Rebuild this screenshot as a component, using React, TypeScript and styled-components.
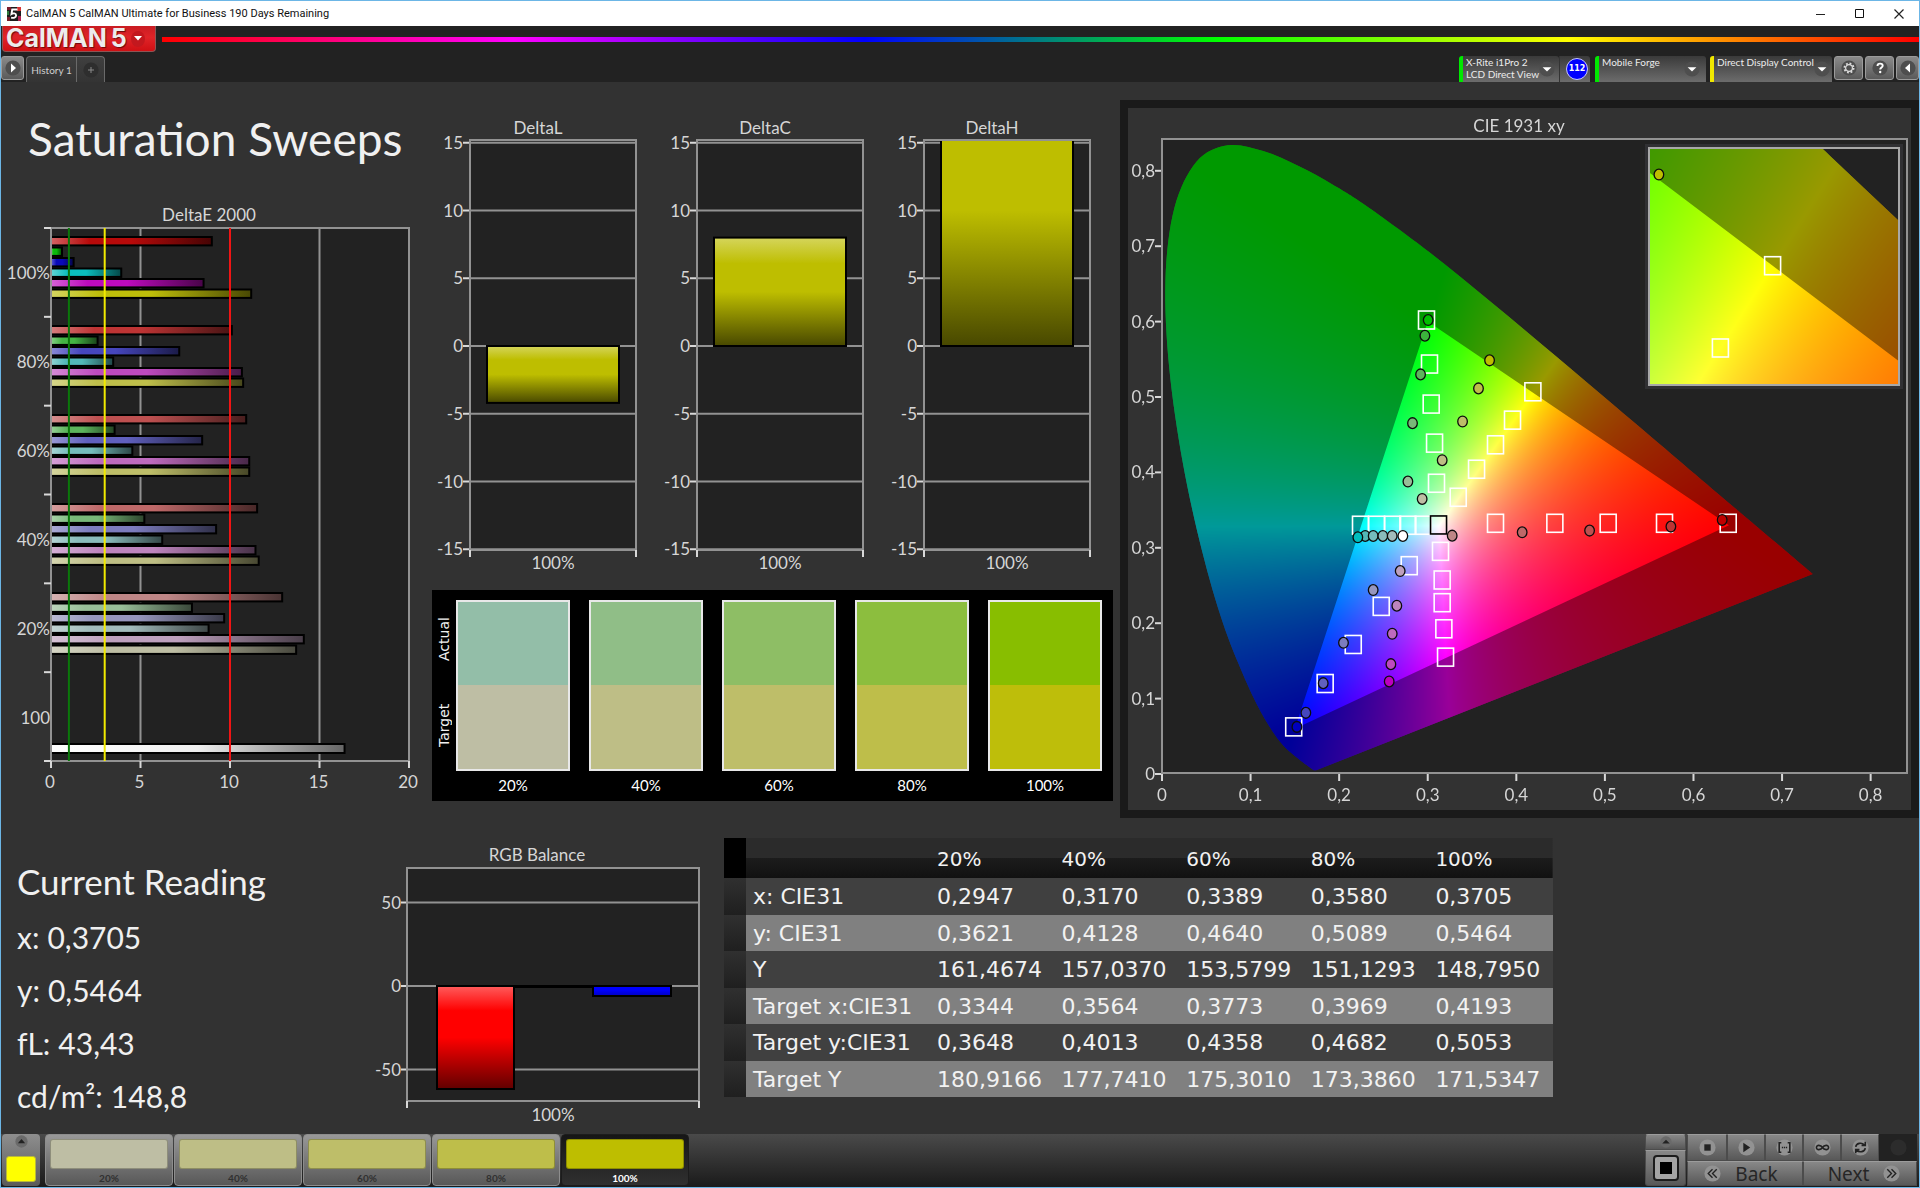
import React, { useLayoutEffect, useRef } from "react";
import styled, { createGlobalStyle, css } from "styled-components";

const ui = `Lato, "Open Sans", sans-serif`;
const wide = `"DejaVu Sans", Verdana, sans-serif`;
const system = `"Noto Sans", "Open Sans", sans-serif`;

const GlobalStyle = createGlobalStyle`
  *, *::before, *::after { box-sizing: border-box; }
  body { margin: 0; background: #323232; font-family: ${ui}; color: #f0f0f0; }
  button { font: inherit; color: inherit; border: 0; padding: 0; margin: 0; background: none; cursor: pointer; }
  h1, h2, p, dl, dd, dt { margin: 0; font-weight: 400; }
  svg { display: block; }
`;

/* ---------- window frame ---------- */

const Window = styled.div`
  min-height: 100vh;
  display: flex;
  flex-direction: column;
  border: 1px solid #6cb6e6;
`;

const TitleBar = styled.header`
  display: flex;
  align-items: center;
  height: 25px;
  padding: 0 8px 0 6px;
  gap: 5px;
  background: #fff;
  color: #111;
  font: 11px/16px Roboto, sans-serif;
`;

const Spacer = styled.div`
  flex: 1;
`;

const WindowButton = styled.button`
  display: grid;
  place-items: center;
  width: 24px;
  height: 24px;
  margin-left: 10px;
`;

const BrandBar = styled.div`
  display: flex;
  align-items: flex-start;
  gap: 6px;
  height: 30px;
  background: #222;
`;

const Brand = styled.button`
  display: flex;
  align-items: center;
  gap: 4px;
  width: 154px;
  height: 26px;
  margin-left: 1px;
  padding: 0 10px 2px 3px;
  border-radius: 0 0 4px 4px;
  border: 1px solid #8d5555;
  border-top: 0;
  background: linear-gradient(#c91c22, #e02428 45%, #cf1014);
  color: #ececec;
  font: 700 25px/22px Inter, sans-serif;
  text-shadow: 1px 1px 1px #6d0a0a;
`;

const BrandArrow = styled.span`
  display: grid;
  place-items: center;
  width: 16px;
  height: 16px;
  margin: 2px 0 0 auto;
  border-radius: 50%;
  background: #c3181e;
`;

const Spectrum = styled.div`
  flex: 1;
  height: 5px;
  margin-top: 11px;
  background: linear-gradient(90deg, #f00, #f0f 20%, #00f 40%, #0f0 60%, #ff0 80%, #f00);
`;

const TabBar = styled.nav`
  display: flex;
  align-items: flex-start;
  height: 26px;
  background: #222;
  font-size: 11px;
`;

const bevel = css`
  border: 1px solid #9b9b9b;
  border-radius: 3px;
  background: linear-gradient(#8a8a8a, #5a5a5a);
`;

const ToolButton = styled.button<{ $edge?: "left" | "right" }>`
  ${bevel}
  display: grid;
  place-items: center;
  width: ${(p) => (p.$edge ? 23 : 29)}px;
  height: 24px;
  margin-right: ${(p) => (p.$edge === "right" ? 0 : 2)}px;
`;

const Tab = styled.button<{ $add?: boolean }>`
  height: 26px;
  display: grid;
  place-items: center;
  width: ${(p) => (p.$add ? 28 : 51)}px;
  border: 1px solid #6a6a6a;
  border-width: 1px 1px 0 ${(p) => (p.$add ? 0 : 1)}px;
  border-radius: ${(p) => (p.$add ? "0 4px 0 0" : "4px 0 0 0")};
  background: linear-gradient(#3f3f3f, #343434);
  color: #cfcfcf;
  font-size: 10px;
`;

const Device = styled.button<{ $state: string; $width: number }>`
  display: flex;
  align-items: flex-start;
  width: ${(p) => p.$width}px;
  height: 26px;
  padding: 0 6px 0 3px;
  border-left: 4px solid ${(p) => p.$state};
  border-radius: 3px 3px 0 0;
  background: linear-gradient(#3a3a3a, #6c6c6c);
  color: #ececec;
  font-size: 10px;
  line-height: 12px;
  text-align: left;
  white-space: nowrap;
`;

const DeviceArrow = styled.span`
  margin: 5px 0 0 auto;
`;

const Count = styled.div`
  display: grid;
  place-items: center;
  width: 31px;
  height: 26px;
  margin-right: 5px;
  padding-left: 4px;
  border-left: 1px solid #333;
  border-radius: 0 3px 0 0;
  background: linear-gradient(#3a3a3a, #6c6c6c);
`;

const CountBadge = styled.span`
  display: grid;
  place-items: center;
  width: 22px;
  height: 22px;
  border-radius: 50%;
  border: 1px solid #c9c9ff;
  background: #00f;
  color: #fff;
  font: 700 8px/10px ${wide};
`;

const Gap = styled.span<{ $size: number }>`
  width: ${(p) => p.$size}px;
`;

/* ---------- page ---------- */

const Page = styled.main`
  flex: 1;
  background: #323232;
`;

const Upper = styled.section`
  display: grid;
  grid-template-columns: 424fr 695fr 799fr;
  align-items: start;
`;

const Lower = styled.section`
  display: grid;
  grid-template-columns: 374fr 349fr 829fr 366fr;
  align-items: start;
`;

const Heading = styled.h1`
  height: 123px;
  padding: 25px 0 0 27px;
  font-size: 46px;
  line-height: 64px;
  white-space: nowrap;
`;

const Middle = styled.div`
  padding-top: 36px;
`;

const DeltaRow = styled.div`
  display: grid;
  grid-template-columns: repeat(3, 1fr);
  padding-right: 14px;
`;

const Chart = styled.svg`
  width: 100%;
  height: auto;
  font-family: ${ui};
  font-size: 17px;
  fill: #d6d6d6;
`;

const SwatchPanel = styled.div`
  display: flex;
  height: 211px;
  margin: 0 7px;
  padding: 10px 11px 0 0;
  background: #000;
`;

const SwatchSide = styled.div`
  display: grid;
  grid-template-rows: 78px 94px;
  justify-content: center;
  align-content: start;
  width: 24px;
  font: 14px/18px ${wide};
`;

const SideLabel = styled.span`
  display: grid;
  place-items: center;
  writing-mode: vertical-rl;
  transform: rotate(180deg);
`;

const SwatchGrid = styled.div`
  flex: 1;
  display: grid;
  grid-template-columns: repeat(5, 1fr);
  column-gap: 19px;
`;

const Swatch = styled.figure`
  margin: 0;
  text-align: center;
  font-size: 15px;
  line-height: 28px;
  color: #fff;
`;

const SwatchPair = styled.div<{ $actual: string; $target: string }>`
  height: 171px;
  border: 2px solid #e8e8e8;
  background: linear-gradient(${(p) => `${p.$actual} 50%, ${p.$target} 50%`});
`;

const CiePanel = styled.div`
  display: grid;
  margin-top: 18px;
  border: 8px solid #1a1a1a;

  > * {
    grid-area: 1 / 1;
  }
`;

const GamutCanvas = styled.canvas`
  display: block;
  width: 100%;
  height: auto;
`;

const Reading = styled.div`
  padding: 33px 0 0 16px;
`;

const ReadingTitle = styled.h2`
  font-size: 35px;
  line-height: 60px;
`;

const ReadingList = styled.dl`
  font-size: 30px;
  line-height: 53px;
`;

const ReadingItem = styled.div`
  display: flex;
  gap: 8px;
`;

const BalanceBox = styled.div`
  padding-top: 20px;
`;

const Table = styled.table`
  width: 100%;
  height: 259px;
  margin-top: 20px;
  table-layout: fixed;
  border-collapse: collapse;
  font: 22px/26px ${wide};
  text-align: left;
  white-space: nowrap;
  color: #f2f2f2;

  th,
  td {
    padding: 2px 0 0 7px;
    font-weight: 400;
  }
`;

const HeadRow = styled.tr`
  height: 40px;
  font-size: 20px;
  background: linear-gradient(#2b2b2b 50%, #1c1c1c 50%, #111);
`;

const HeadGrip = styled.td`
  background: #000;
`;

const Row = styled.tr<{ $light: boolean }>`
  background: ${(p) => (p.$light ? "#808080" : "#404040")};
`;

const Grip = styled.td`
  background: linear-gradient(#303030, #1f1f1f);
`;

const StripCol = styled.col`
  width: 22px;
`;

const LabelCol = styled.col`
  width: 184px;
`;

/* ---------- bottom bar ---------- */

const Dock = styled.footer`
  display: flex;
  height: 53px;
  padding: 0 2px 1px 1px;
  background: linear-gradient(#4a4a4a, #1a1a1a);
`;

const PatchPicker = styled.button`
  display: flex;
  flex-direction: column;
  align-items: center;
  justify-content: space-between;
  width: 38px;
  margin-right: 5px;
  padding: 1px 0 4px;
  border-radius: 4px;
  background: linear-gradient(#8e8e8e, #5a5a5a);
`;

const PatchColor = styled.span`
  width: 30px;
  height: 26px;
  border-radius: 3px;
  border: 1px solid #b8b83a;
  background: #ff0;
`;

const Patch = styled.button<{ $color: string; $active: boolean }>`
  display: flex;
  flex-direction: column;
  width: 128px;
  margin-right: 1px;
  padding: 4px 4px 0;
  border-radius: 4px;
  border: 1px solid ${(p) => (p.$active ? "#1c1c1c" : "#8d8d8d")};
  background: ${(p) => (p.$active ? "linear-gradient(#161616, #303030)" : "linear-gradient(#989898, #585858)")};
  color: ${(p) => (p.$active ? "#fff" : "#303030")};
  font-size: 10px;
  font-weight: 700;
  line-height: 14px;

  &::before {
    content: "";
    width: 100%;
    height: 30px;
    margin-bottom: 2px;
    border-radius: 3px;
    border: 1px solid rgba(0, 0, 0, 0.25);
    background: ${(p) => p.$color};
  }

  > span {
    width: 100%;
    text-align: center;
  }
`;

const grey = css`
  border: 1px solid #4c4c4c;
  border-top-color: #9c9c9c;
  background: linear-gradient(#888, #585858);
`;

const StopColumn = styled.div`
  display: grid;
  grid-template-rows: 16px 1fr;
  width: 41px;
  margin-right: 1px;

  button {
    ${grey}
    display: grid;
    place-items: center;
    border-radius: 3px 3px 0 0;
  }

  button + button {
    border-radius: 0 0 3px 3px;
  }
`;

const Transport = styled.div`
  display: grid;
  grid-template-columns: 40px repeat(5, 38px);
  grid-template-rows: 27px 25px;
`;

const TransportButton = styled.button<{ $off?: boolean }>`
  ${grey}
  display: grid;
  place-items: center;
  ${(p) => p.$off && "background: #222; border-color: #222;"}
`;

const StepButton = styled.button<{ $next?: boolean }>`
  ${grey}
  grid-column: span 3;
  display: flex;
  align-items: center;
  justify-content: center;
  gap: 14px;
  padding-left: ${(p) => (p.$next ? 8 : 0)}px;
  padding-right: ${(p) => (p.$next ? 0 : 8)}px;
  color: #262626;
  font: 19px/22px ${system};
`;

/* ---------- small drawings ---------- */

type DiscProps = { size?: number; tone?: string; children?: React.ReactNode };

const Disc = ({ size = 16, tone = "#4e4e4e", children }: DiscProps) => (
  <svg width={size} height={size} viewBox="0 0 16 16" aria-hidden="true">
    <circle cx="8" cy="8" r="7.6" fill={tone} />
    {children}
  </svg>
);

const DownArrow = () => <path d="M3.6 6.2h8.8L8 10.6z" fill="#fff" />;

const AppIcon = () => (
  <svg width="14" height="14" viewBox="0 0 14 14" aria-hidden="true">
    <rect width="14" height="14" fill="#1c1c1c" />
    <path d="M0 0h4v3H0zM0 10h3v4H0z" fill="#7a1c2a" />
    <path d="M10 0h4v4h-4z" fill="#d63434" />
    <path d="M11 9h3v5h-3z" fill="#b02050" />
    <path d="M0 4h2v4H0z" fill="#2f7a3c" />
    <path d="M10.500 2.500H5.200L4.500 7c1.500-1 4.600-1 4.600 1.400 0 2.200-2.600 2.800-5 2.200" fill="none" stroke="#fff" strokeWidth="1.900" />
  </svg>
);

/* ---------- bar charts ---------- */

const axis = { stroke: "#929292", strokeWidth: 2, fill: "none" };
const tick = { stroke: "#d8d8d8", strokeWidth: 2 };

const mix = (hex: string, to: number, amount: number) => {
  const parts = [1, 3, 5].map((i) => parseInt(hex.slice(i, i + 2), 16));
  return `rgb(${parts.map((v) => Math.round(v + (to - v) * amount)).join(",")})`;
};

const Shade = ({ id, color, vertical }: { id: string; color: string; vertical?: boolean }) => (
  <linearGradient id={id} x1="0" y1="0" x2={vertical ? 0 : 1} y2={vertical ? 1 : 0}>
    <stop offset="0" stopColor={mix(color, 255, 0.36)} />
    <stop offset="0.24" stopColor={color} />
    <stop offset="0.5" stopColor={color} />
    <stop offset="1" stopColor={mix(color, 0, 0.62)} />
  </linearGradient>
);

const sweeps = [
  { label: "100%", colors: ["#b80a0a", "#0ab80a", "#0a0ab8", "#0abebe", "#be0abe", "#bebe0a"], values: [9.04, 0.67, 1.32, 3.98, 8.58, 11.24] },
  { label: "80%", colors: ["#be3434", "#44b444", "#4646be", "#52b8b8", "#be4abe", "#bebe4a"], values: [10.16, 2.66, 7.22, 3.53, 10.72, 10.79] },
  { label: "60%", colors: ["#be5050", "#5cb45c", "#6060be", "#74bcbc", "#be6abe", "#bebe68"], values: [10.96, 3.61, 8.5, 4.6, 11.13, 11.13] },
  { label: "40%", colors: ["#be6868", "#78b878", "#7c7cbe", "#8abcbc", "#be84be", "#bebe84"], values: [11.57, 5.27, 9.28, 6.27, 11.48, 11.66] },
  { label: "20%", colors: ["#be8686", "#98be98", "#9696be", "#a2bcbc", "#bea0be", "#bebea4"], values: [12.97, 7.93, 9.73, 8.86, 14.18, 13.75] },
];

const DeltaE = () => {
  const x0 = 50;
  const y0 = 23;
  const unit = 17.9;
  const height = 533;
  const band = height / 6;
  const right = x0 + 20 * unit;
  const bottom = y0 + height;
  return (
    <Chart viewBox="0 0 424 595" role="img" aria-label="DeltaE 2000">
      <defs>
        {sweeps.flatMap((s, g) => s.colors.map((c, i) => <Shade key={`${g}${i}`} id={`de${g}${i}`} color={c} />))}
        <linearGradient id="deWhite">
          <stop offset="0" stopColor="#fff" />
          <stop offset="0.5" stopColor="#eee" />
          <stop offset="1" stopColor="#666" />
        </linearGradient>
      </defs>
      <text x="208" y="16" textAnchor="middle">DeltaE 2000</text>
      <rect x={x0} y={y0} width={right - x0} height={height} fill="#222" />
      {[5, 10, 15].map((v) => (
        <line key={v} x1={x0 + v * unit} x2={x0 + v * unit} y1={y0} y2={bottom} {...axis} />
      ))}
      {sweeps.map((s, g) =>
        s.values.map((v, i) => (
          <rect key={`${g}${i}`} x={x0} y={y0 + g * 89 + i * 10.5 + 9} width={v * unit - 1} height="8.400" fill={`url(#de${g}${i})`} stroke="#000" strokeWidth="2" />
        )),
      )}
      <rect x={x0} y={bottom - 17} width={16.4 * unit} height="9" fill="url(#deWhite)" stroke="#000" strokeWidth="2" />
      <rect x={x0} y={y0} width={right - x0} height={height} {...axis} />
      {[0, 1, 2, 3, 4, 5, 6].map((i) => (
        <line key={i} x1={x0 - 7} x2={x0} y1={y0 + i * band} y2={y0 + i * band} {...tick} />
      ))}
      {[0, 5, 10, 15, 20].map((v) => (
        <g key={v}>
          <line x1={x0 + v * unit} x2={x0 + v * unit} y1={bottom} y2={bottom + 7} {...tick} />
          <text x={x0 + v * unit - 1} y={bottom + 27} textAnchor="middle">{v}</text>
        </g>
      ))}
      {[...sweeps.map((s) => s.label), "100"].map((label, i) => (
        <text key={i} x={x0 - 1} y={y0 + (i + 0.5) * band + 7} textAnchor="end">{label}</text>
      ))}
      <line x1={x0 + unit} x2={x0 + unit} y1={y0} y2={bottom} stroke="#0a780a" strokeWidth="2" />
      <line x1={x0 + 3 * unit} x2={x0 + 3 * unit} y1={y0} y2={bottom} stroke="#f2ea00" strokeWidth="2" />
      <line x1={x0 + 10 * unit} x2={x0 + 10 * unit} y1={y0} y2={bottom} stroke="#f01414" strokeWidth="2" />
    </Chart>
  );
};

const DeltaBar = ({ name, value }: { name: string; value: number }) => {
  const y = (v: number) => 228 - v * 13.55;
  const clipped = value > 15.4;
  const top = y(Math.max(value, 0));
  const height = Math.abs(value) * 13.55;
  return (
    <Chart viewBox="0 0 227 472" role="img" aria-label={name}>
      <defs>
        <Shade id={`fill${name}`} color="#bebe00" vertical />
        <clipPath id={`clip${name}`}>
          <rect x="45" y="22" width="167" height="410" />
        </clipPath>
      </defs>
      <text x="113" y="16" textAnchor="middle">{name}</text>
      <rect x="45" y="22" width="166" height="410" fill="#222" />
      {[15, 10, 5, 0, -5, -10, -15].map((v) => (
        <g key={v}>
          <line x1="45" x2="211" y1={y(v)} y2={y(v)} {...axis} />
          <line x1="38" x2="44" y1={y(v)} y2={y(v)} {...tick} />
          <text x="38" y={y(v) + 6} textAnchor="end">{v}</text>
        </g>
      ))}
      <rect x="62" y={top} width="132" height={height} fill={`url(#fill${name})`} stroke="#000" strokeWidth="2" clipPath={clipped ? `url(#clip${name})` : undefined} />
      <rect x="45" y="22" width="166" height="410" {...axis} />
      <path d="M45 432v7M211 432v7" {...tick} />
      <text x="128" y="451" textAnchor="middle">100%</text>
    </Chart>
  );
};

const RgbBalance = () => {
  const y = (v: number) => 148 - v * 1.67;
  return (
    <Chart viewBox="0 0 349 296" role="img" aria-label="RGB Balance">
      <defs>
        <Shade id="balRed" color="#ff0000" vertical />
        <linearGradient id="balBlue" x1="0" y1="0" x2="0" y2="1">
          <stop offset="0.4" stopColor="#0000ff" />
          <stop offset="1" stopColor="#0000c0" />
        </linearGradient>
      </defs>
      <text x="162" y="23" textAnchor="middle">RGB Balance</text>
      <rect x="32" y="30" width="292" height="233" fill="#222" />
      {[50, 0, -50].map((v) => (
        <g key={v}>
          <line x1="32" x2="324" y1={y(v)} y2={y(v)} {...axis} />
          <line x1="26" x2="31" y1={y(v)} y2={y(v)} {...tick} />
          <text x="26" y={y(v) + 6} textAnchor="end">{v}</text>
        </g>
      ))}
      <rect x="62" y="148" width="77" height="103" fill="url(#balRed)" stroke="#000" strokeWidth="2" />
      <rect x="139" y="147" width="79" height="3" fill="#000" />
      <rect x="218" y="148" width="78" height="10" fill="url(#balBlue)" stroke="#000" strokeWidth="2" />
      <rect x="32" y="30" width="292" height="233" {...axis} />
      <path d="M32 263v7M324 263v7" {...tick} />
      <text x="178" y="283" textAnchor="middle">100%</text>
    </Chart>
  );
};

/* ---------- chromaticity diagram ---------- */

type Point = [number, number];
type View = { x: number; y: number; w: number; h: number; ox: number; oy: number; sx: number; sy: number };

const CIE_W = 783;
const CIE_H = 702;

/* ox/oy is the pixel position of chromaticity (0, 0); sx/sy are pixels per unit. */
const mainView: View = { x: 34, y: 31, w: 745, h: 634, ox: 34, oy: 666, sx: 885.8, sy: 754 };
const zoomView: View = { x: 521, y: 40, w: 250, h: 237, ox: 644.6 - 0.4193 * 2330, oy: 157.7 + 0.5053 * 2218, sx: 2330, sy: 2218 };

const locus: Point[] = [
  [0.1741, 0.005], [0.1714, 0.0051], [0.1689, 0.0069], [0.1644, 0.0109], [0.1566, 0.0177], [0.144, 0.0297],
  [0.1355, 0.0399], [0.1241, 0.0578], [0.1096, 0.0868], [0.0913, 0.1327], [0.0687, 0.2007], [0.0454, 0.295],
  [0.0235, 0.4127], [0.0082, 0.5384], [0.0039, 0.6548], [0.0139, 0.7502], [0.0389, 0.812], [0.0743, 0.8338],
  [0.1142, 0.8262], [0.1547, 0.8059], [0.1929, 0.7816], [0.2296, 0.7543], [0.3016, 0.6923], [0.3731, 0.6245],
  [0.4441, 0.5547], [0.5125, 0.4866], [0.5752, 0.4242], [0.627, 0.3725], [0.6658, 0.334], [0.6915, 0.3083],
  [0.719, 0.2809], [0.7347, 0.2653],
];

const gamut: Point[] = [[0.64, 0.33], [0.3, 0.6], [0.15, 0.06]];

const place = (v: View, [x, y]: Point): Point => [v.ox + x * v.sx, v.oy - y * v.sy];

const traceLocus = (path: Path2D, v: View) => {
  const p = locus.map((pt) => place(v, pt));
  path.moveTo(p[0][0], p[0][1]);
  for (let i = 0; i < p.length - 1; i++) {
    const a = p[Math.max(i - 1, 0)];
    const b = p[i];
    const c = p[i + 1];
    const d = p[Math.min(i + 2, p.length - 1)];
    path.bezierCurveTo(b[0] + (c[0] - a[0]) / 6, b[1] + (c[1] - a[1]) / 6, c[0] - (d[0] - b[0]) / 6, c[1] - (d[1] - b[1]) / 6, c[0], c[1]);
  }
  path.closePath();
};

const paintView = (ctx: CanvasRenderingContext2D, v: View) => {
  const layer = document.createElement("canvas");
  layer.width = v.w;
  layer.height = v.h;
  const layerCtx = layer.getContext("2d")!;
  const image = layerCtx.createImageData(v.w, v.h);
  for (let py = 0; py < v.h; py++) {
    for (let px = 0; px < v.w; px++) {
      const x = (v.x + px + 0.5 - v.ox) / v.sx;
      const y = Math.max((v.oy - (v.y + py + 0.5)) / v.sy, 0.0005);
      const z = 1 - x - y;
      const r = Math.max(3.2406 * x - 1.5372 * y - 0.4986 * z, 0);
      const g = Math.max(-0.9689 * x + 1.8758 * y + 0.0415 * z, 0);
      const b = Math.max(0.0557 * x - 0.204 * y + 1.057 * z, 0);
      const k = 255 / Math.max(r, g, b);
      const i = (py * v.w + px) * 4;
      image.data[i] = r * k;
      image.data[i + 1] = g * k;
      image.data[i + 2] = b * k;
      image.data[i + 3] = 255;
    }
  }
  layerCtx.putImageData(image, 0, 0);

  ctx.save();
  ctx.beginPath();
  ctx.rect(v.x, v.y, v.w, v.h);
  ctx.clip();
  ctx.fillStyle = "#222";
  ctx.fillRect(v.x, v.y, v.w, v.h);
  const outline = new Path2D();
  traceLocus(outline, v);
  ctx.clip(outline);
  ctx.drawImage(layer, v.x, v.y);
  const dim = new Path2D();
  dim.rect(v.x, v.y, v.w, v.h);
  gamut.forEach((pt, i) => {
    const [x, y] = place(v, pt);
    if (i) dim.lineTo(x, y);
    else dim.moveTo(x, y);
  });
  dim.closePath();
  ctx.fillStyle = "rgba(0, 0, 0, 0.4)";
  ctx.fill(dim, "evenodd");
  ctx.restore();
};

const targets: Point[] = [
  [0.2986, 0.6021], [0.302, 0.5437], [0.3039, 0.4906], [0.3077, 0.4388], [0.3099, 0.3856],
  [0.4187, 0.5069], [0.3957, 0.4693], [0.3765, 0.4366], [0.3551, 0.4042], [0.3344, 0.367],
  [0.3765, 0.3325], [0.4435, 0.3325], [0.5037, 0.3325], [0.5673, 0.3325], [0.6392, 0.3325],
  [0.2241, 0.3299], [0.2422, 0.3299], [0.2603, 0.3299], [0.2776, 0.3299], [0.2949, 0.3299],
  [0.3144, 0.2953], [0.3163, 0.2573], [0.3163, 0.2272], [0.3182, 0.1926], [0.3201, 0.155],
  [0.2791, 0.2763], [0.2475, 0.2223], [0.2159, 0.1718], [0.1842, 0.12], [0.1487, 0.0625],
];

const readings: [number, number, string][] = [
  [0.3005, 0.6021, "#00be00"], [0.2968, 0.5813, "#3cb43c"], [0.2919, 0.53, "#5cb45c"], [0.2828, 0.4653, "#78b878"], [0.2776, 0.3879, "#98be98"],
  [0.3698, 0.5486, "#bebe00"], [0.3573, 0.5114, "#bebe4a"], [0.3393, 0.4675, "#bebe68"], [0.3163, 0.4162, "#bebe84"], [0.2937, 0.3648, "#bebea4"],
  [0.6324, 0.3369, "#be0000"], [0.5745, 0.3281, "#be3434"], [0.4827, 0.3228, "#be5050"], [0.4066, 0.3206, "#be6868"], [0.3276, 0.3161, "#be8686"],
  [0.2294, 0.3157, "#52b8b8"], [0.2384, 0.3157, "#74bcbc"], [0.2493, 0.3157, "#8abcbc"], [0.2599, 0.3157, "#a2bcbc"], [0.2719, 0.3157, "#ffffff"],
  [0.2211, 0.3139, "#00bebe"],
  [0.2565, 0.1227, "#be00be"], [0.2584, 0.1457, "#be4abe"], [0.2599, 0.186, "#be6abe"], [0.2651, 0.2232, "#be84be"], [0.2689, 0.2692, "#bea0be"],
  [0.2384, 0.244, "#9696be"], [0.2049, 0.174, "#7c7cbe"], [0.182, 0.1205, "#6060be"], [0.1624, 0.0811, "#4646be"], [0.1523, 0.0625, "#0000be"],
];

const Target = ({ at, color = "#fff" }: { at: Point; color?: string }) => (
  <rect x={at[0] - 8} y={at[1] - 9} width="16" height="18" fill="none" stroke={color} strokeWidth="1.600" />
);

const Sample = ({ at, color }: { at: Point; color: string }) => (
  <ellipse cx={at[0]} cy={at[1]} rx="4.800" ry="5.400" fill={color} stroke="#0c0c0c" strokeWidth="1.300" />
);

const comma = (v: number) => (v === 0 ? "0" : v.toFixed(1).replace(".", ","));

const Chromaticity = () => {
  const canvas = useRef<HTMLCanvasElement>(null);
  useLayoutEffect(() => {
    const ctx = canvas.current!.getContext("2d")!;
    paintView(ctx, mainView);
    ctx.fillStyle = "#303033";
    ctx.fillRect(zoomView.x - 4, zoomView.y - 4, zoomView.w + 8, zoomView.h + 8);
    paintView(ctx, zoomView);
  }, []);
  const steps = [0, 0.1, 0.2, 0.3, 0.4, 0.5, 0.6, 0.7, 0.8];
  return (
    <CiePanel>
      <GamutCanvas ref={canvas} width={CIE_W} height={CIE_H} />
      <Chart viewBox={`0 0 ${CIE_W} ${CIE_H}`} role="img" aria-label="CIE 1931 xy">
        <text x="391" y="24" textAnchor="middle">CIE 1931 xy</text>
        <rect x="34" y="31" width="745" height="634" {...axis} />
        {steps.map((v) => {
          const [x, y] = place(mainView, [v, v]);
          return (
            <g key={v}>
              <line x1={x} x2={x} y1="666" y2="673" {...tick} />
              <text x={x} y="693" textAnchor="middle">{comma(v)}</text>
              <line x1="27" x2="33" y1={y} y2={y} {...tick} />
              <text x="27" y={y + 6} textAnchor="end">{comma(v)}</text>
            </g>
          );
        })}
        {targets.map((t, i) => (
          <Target key={i} at={place(mainView, t)} />
        ))}
        <Target at={place(mainView, [0.3122, 0.3303])} color="#000" />
        {readings.map(([x, y, c], i) => (
          <Sample key={i} at={place(mainView, [x, y])} color={c} />
        ))}
        <rect x={zoomView.x} y={zoomView.y} width={zoomView.w} height={zoomView.h} {...axis} stroke="#a8a8a8" />
        <Target at={place(zoomView, [0.4193, 0.5053])} />
        <Target at={place(zoomView, [0.3969, 0.4682])} />
        <Sample at={place(zoomView, [0.3705, 0.5464])} color="#bebe00" />
      </Chart>
    </CiePanel>
  );
};

/* ---------- data ---------- */

const swatches = [
  { label: "20%", actual: "#93bea8", target: "#bebea4", patch: "#bebea4" },
  { label: "40%", actual: "#90be87", target: "#bebe86", patch: "#bebe86" },
  { label: "60%", actual: "#8ebe65", target: "#bebe69", patch: "#bebe69" },
  { label: "80%", actual: "#8cbe3e", target: "#bebe4a", patch: "#bebe4a" },
  { label: "100%", actual: "#88be00", target: "#bebe0a", patch: "#bebe00" },
];

const rows: [string, string[]][] = [
  ["x: CIE31", ["0,2947", "0,3170", "0,3389", "0,3580", "0,3705"]],
  ["y: CIE31", ["0,3621", "0,4128", "0,4640", "0,5089", "0,5464"]],
  ["Y", ["161,4674", "157,0370", "153,5799", "151,1293", "148,7950"]],
  ["Target x:CIE31", ["0,3344", "0,3564", "0,3773", "0,3969", "0,4193"]],
  ["Target y:CIE31", ["0,3648", "0,4013", "0,4358", "0,4682", "0,5053"]],
  ["Target Y", ["180,9166", "177,7410", "175,3010", "173,3860", "171,5347"]],
];

const current = [
  ["x:", "0,3705"],
  ["y:", "0,5464"],
  ["fL:", "43,43"],
  ["cd/m²:", "148,8"],
];

const transport = [
  { name: "Stop", icon: <path d="M5 5h6v6H5z" fill="#222" /> },
  { name: "Play", icon: <path d="M5 3.500v9l6.500-4.500z" fill="#222" /> },
  { name: "Read series", icon: <path d="M5 3.500H3v9h2M11 3.500h2v9h-2M5.500 8h1.200M7.400 8h1.200M9.300 8h1.200" fill="none" stroke="#222" strokeWidth="1.500" /> },
  { name: "Continuous", icon: <path d="M8 8C6.500 5.600 2.300 5 2.300 8S6.500 10.400 8 8s5.700-3 5.700 0S9.500 10.400 8 8z" fill="none" stroke="#222" strokeWidth="1.500" /> },
  { name: "Refresh", icon: <path d="M3.500 7.500a4.500 4 0 0 1 8-2M12.500 2.500v3.500H9M12.500 8.500a4.500 4 0 0 1-8 2M3.500 13.500V10H7" fill="none" stroke="#222" strokeWidth="1.500" /> },
];

/* ---------- app ---------- */

export default function App() {
  return (
    <>
      <GlobalStyle />
      <Window>
        <TitleBar>
          <AppIcon />
          <span>CalMAN 5 CalMAN Ultimate for Business 190 Days Remaining</span>
          <Spacer />
          <WindowButton aria-label="Minimize">
            <svg width="10" height="10"><path d="M0 5.500h9" stroke="#222" /></svg>
          </WindowButton>
          <WindowButton aria-label="Maximize">
            <svg width="10" height="10"><path d="M.5.500h8v8h-8z" fill="none" stroke="#111" /></svg>
          </WindowButton>
          <WindowButton aria-label="Close">
            <svg width="10" height="10"><path d="M.5.500l9 9M9.500.500l-9 9" stroke="#222" strokeWidth="1.200" /></svg>
          </WindowButton>
        </TitleBar>

        <BrandBar>
          <Brand>
            <span>CalMAN</span>
            <span>5</span>
            <BrandArrow>
              <svg width="10" height="6"><path d="M1 0h8L5 4.500z" fill="#fff" /></svg>
            </BrandArrow>
          </Brand>
          <Spectrum />
        </BrandBar>

        <TabBar>
          <ToolButton $edge="left" aria-label="Expand">
            <Disc><path d="M6 3.500v9L11 8z" fill="#fff" /></Disc>
          </ToolButton>
          <Tab>History 1</Tab>
          <Tab $add aria-label="Add history">
            <Disc tone="#2e2e2e"><path d="M8 5v6M5 8h6" stroke="#8a8a8a" /></Disc>
          </Tab>
          <Spacer />
          <Device $state="#00e800" $width={100}>
            <span>X-Rite i1Pro 2<br />LCD Direct View</span>
            <DeviceArrow><Disc><DownArrow /></Disc></DeviceArrow>
          </Device>
          <Count><CountBadge>112</CountBadge></Count>
          <Device $state="#00e800" $width={111}>
            <span>Mobile Forge</span>
            <DeviceArrow><Disc><DownArrow /></Disc></DeviceArrow>
          </Device>
          <Gap $size={4} />
          <Device $state="#f0e800" $width={122}>
            <span>Direct Display Control</span>
            <DeviceArrow><Disc><DownArrow /></Disc></DeviceArrow>
          </Device>
          <Gap $size={2} />
          <ToolButton aria-label="Settings">
            <Disc>
              <circle cx="8" cy="8" r="4.600" fill="none" stroke="#ddd" strokeWidth="1.800" strokeDasharray="1.800 1.810" />
              <circle cx="8" cy="8" r="3.400" fill="none" stroke="#ddd" strokeWidth="1.200" />
            </Disc>
          </ToolButton>
          <ToolButton aria-label="Help">
            <Disc>
              <path d="M5.500 6c0-3.200 5.200-3 5.200-.2C10.700 7.600 8.200 7.600 8.200 9.600" fill="none" stroke="#fff" strokeWidth="1.900" />
              <circle cx="8.200" cy="12" r="1.200" fill="#fff" />
            </Disc>
          </ToolButton>
          <ToolButton $edge="right" aria-label="Collapse">
            <Disc><path d="M10 3.500v9L5 8z" fill="#fff" /></Disc>
          </ToolButton>
        </TabBar>

        <Page>
          <Upper>
            <div>
              <Heading>Saturation Sweeps</Heading>
              <DeltaE />
            </div>
            <Middle>
              <DeltaRow>
                <DeltaBar name="DeltaL" value={-4.2} />
                <DeltaBar name="DeltaC" value={8} />
                <DeltaBar name="DeltaH" value={20} />
              </DeltaRow>
              <SwatchPanel>
                <SwatchSide>
                  <SideLabel>Actual</SideLabel>
                  <SideLabel>Target</SideLabel>
                </SwatchSide>
                <SwatchGrid>
                  {swatches.map((s) => (
                    <Swatch key={s.label}>
                      <SwatchPair $actual={s.actual} $target={s.target} />
                      <figcaption>{s.label}</figcaption>
                    </Swatch>
                  ))}
                </SwatchGrid>
              </SwatchPanel>
            </Middle>
            <Chromaticity />
          </Upper>

          <Lower>
            <Reading>
              <ReadingTitle>Current Reading</ReadingTitle>
              <ReadingList>
                {current.map(([k, v]) => (
                  <ReadingItem key={k}>
                    <dt>{k}</dt>
                    <dd>{v}</dd>
                  </ReadingItem>
                ))}
              </ReadingList>
            </Reading>
            <BalanceBox>
              <RgbBalance />
            </BalanceBox>
            <Table>
              <colgroup>
                <StripCol />
                <LabelCol />
                <col span={5} />
              </colgroup>
              <thead>
                <HeadRow>
                  <HeadGrip />
                  <td />
                  {swatches.map((s) => (
                    <th key={s.label} scope="col">{s.label}</th>
                  ))}
                </HeadRow>
              </thead>
              <tbody>
                {rows.map(([label, values], i) => (
                  <Row key={label} $light={i % 2 === 1}>
                    <Grip />
                    <th scope="row">{label}</th>
                    {values.map((v) => (
                      <td key={v}>{v}</td>
                    ))}
                  </Row>
                ))}
              </tbody>
            </Table>
          </Lower>
        </Page>

        <Dock>
          <PatchPicker aria-label="Patch color">
            <Disc size={13} tone="#6a6a6a"><path d="M3.500 10h9L8 5z" fill="#222" /></Disc>
            <PatchColor />
          </PatchPicker>
          {swatches.map((s, i) => (
            <Patch key={s.label} $color={s.patch} $active={i === 4}>
              <span>{s.label}</span>
            </Patch>
          ))}
          <Spacer />
          <StopColumn>
            <button aria-label="More">
              <Disc size={12} tone="#6a6a6a"><path d="M3 10h10L8 5z" fill="#222" /></Disc>
            </button>
            <button aria-label="Full stop">
              <svg width="28" height="28">
                <rect x="2" y="2" width="24" height="24" rx="3" fill="#a4a4a4" stroke="#1c1c1c" strokeWidth="2" />
                <rect x="8" y="8" width="12" height="12" fill="#000" />
              </svg>
            </button>
          </StopColumn>
          <Transport>
            {transport.map((t) => (
              <TransportButton key={t.name} aria-label={t.name}>
                <Disc size={17} tone="#929292">{t.icon}</Disc>
              </TransportButton>
            ))}
            <TransportButton $off aria-label="Idle">
              <Disc size={17} tone="#2c2c2c" />
            </TransportButton>
            <StepButton>
              <Disc size={17} tone="#929292"><path d="M8 4L4 8l4 4M12 4L8 8l4 4" fill="none" stroke="#222" strokeWidth="1.300" /></Disc>
              Back
            </StepButton>
            <StepButton $next>
              Next
              <Disc size={17} tone="#929292"><path d="M4 4l4 4-4 4M8 4l4 4-4 4" fill="none" stroke="#222" strokeWidth="1.300" /></Disc>
            </StepButton>
          </Transport>
        </Dock>
      </Window>
    </>
  );
}
